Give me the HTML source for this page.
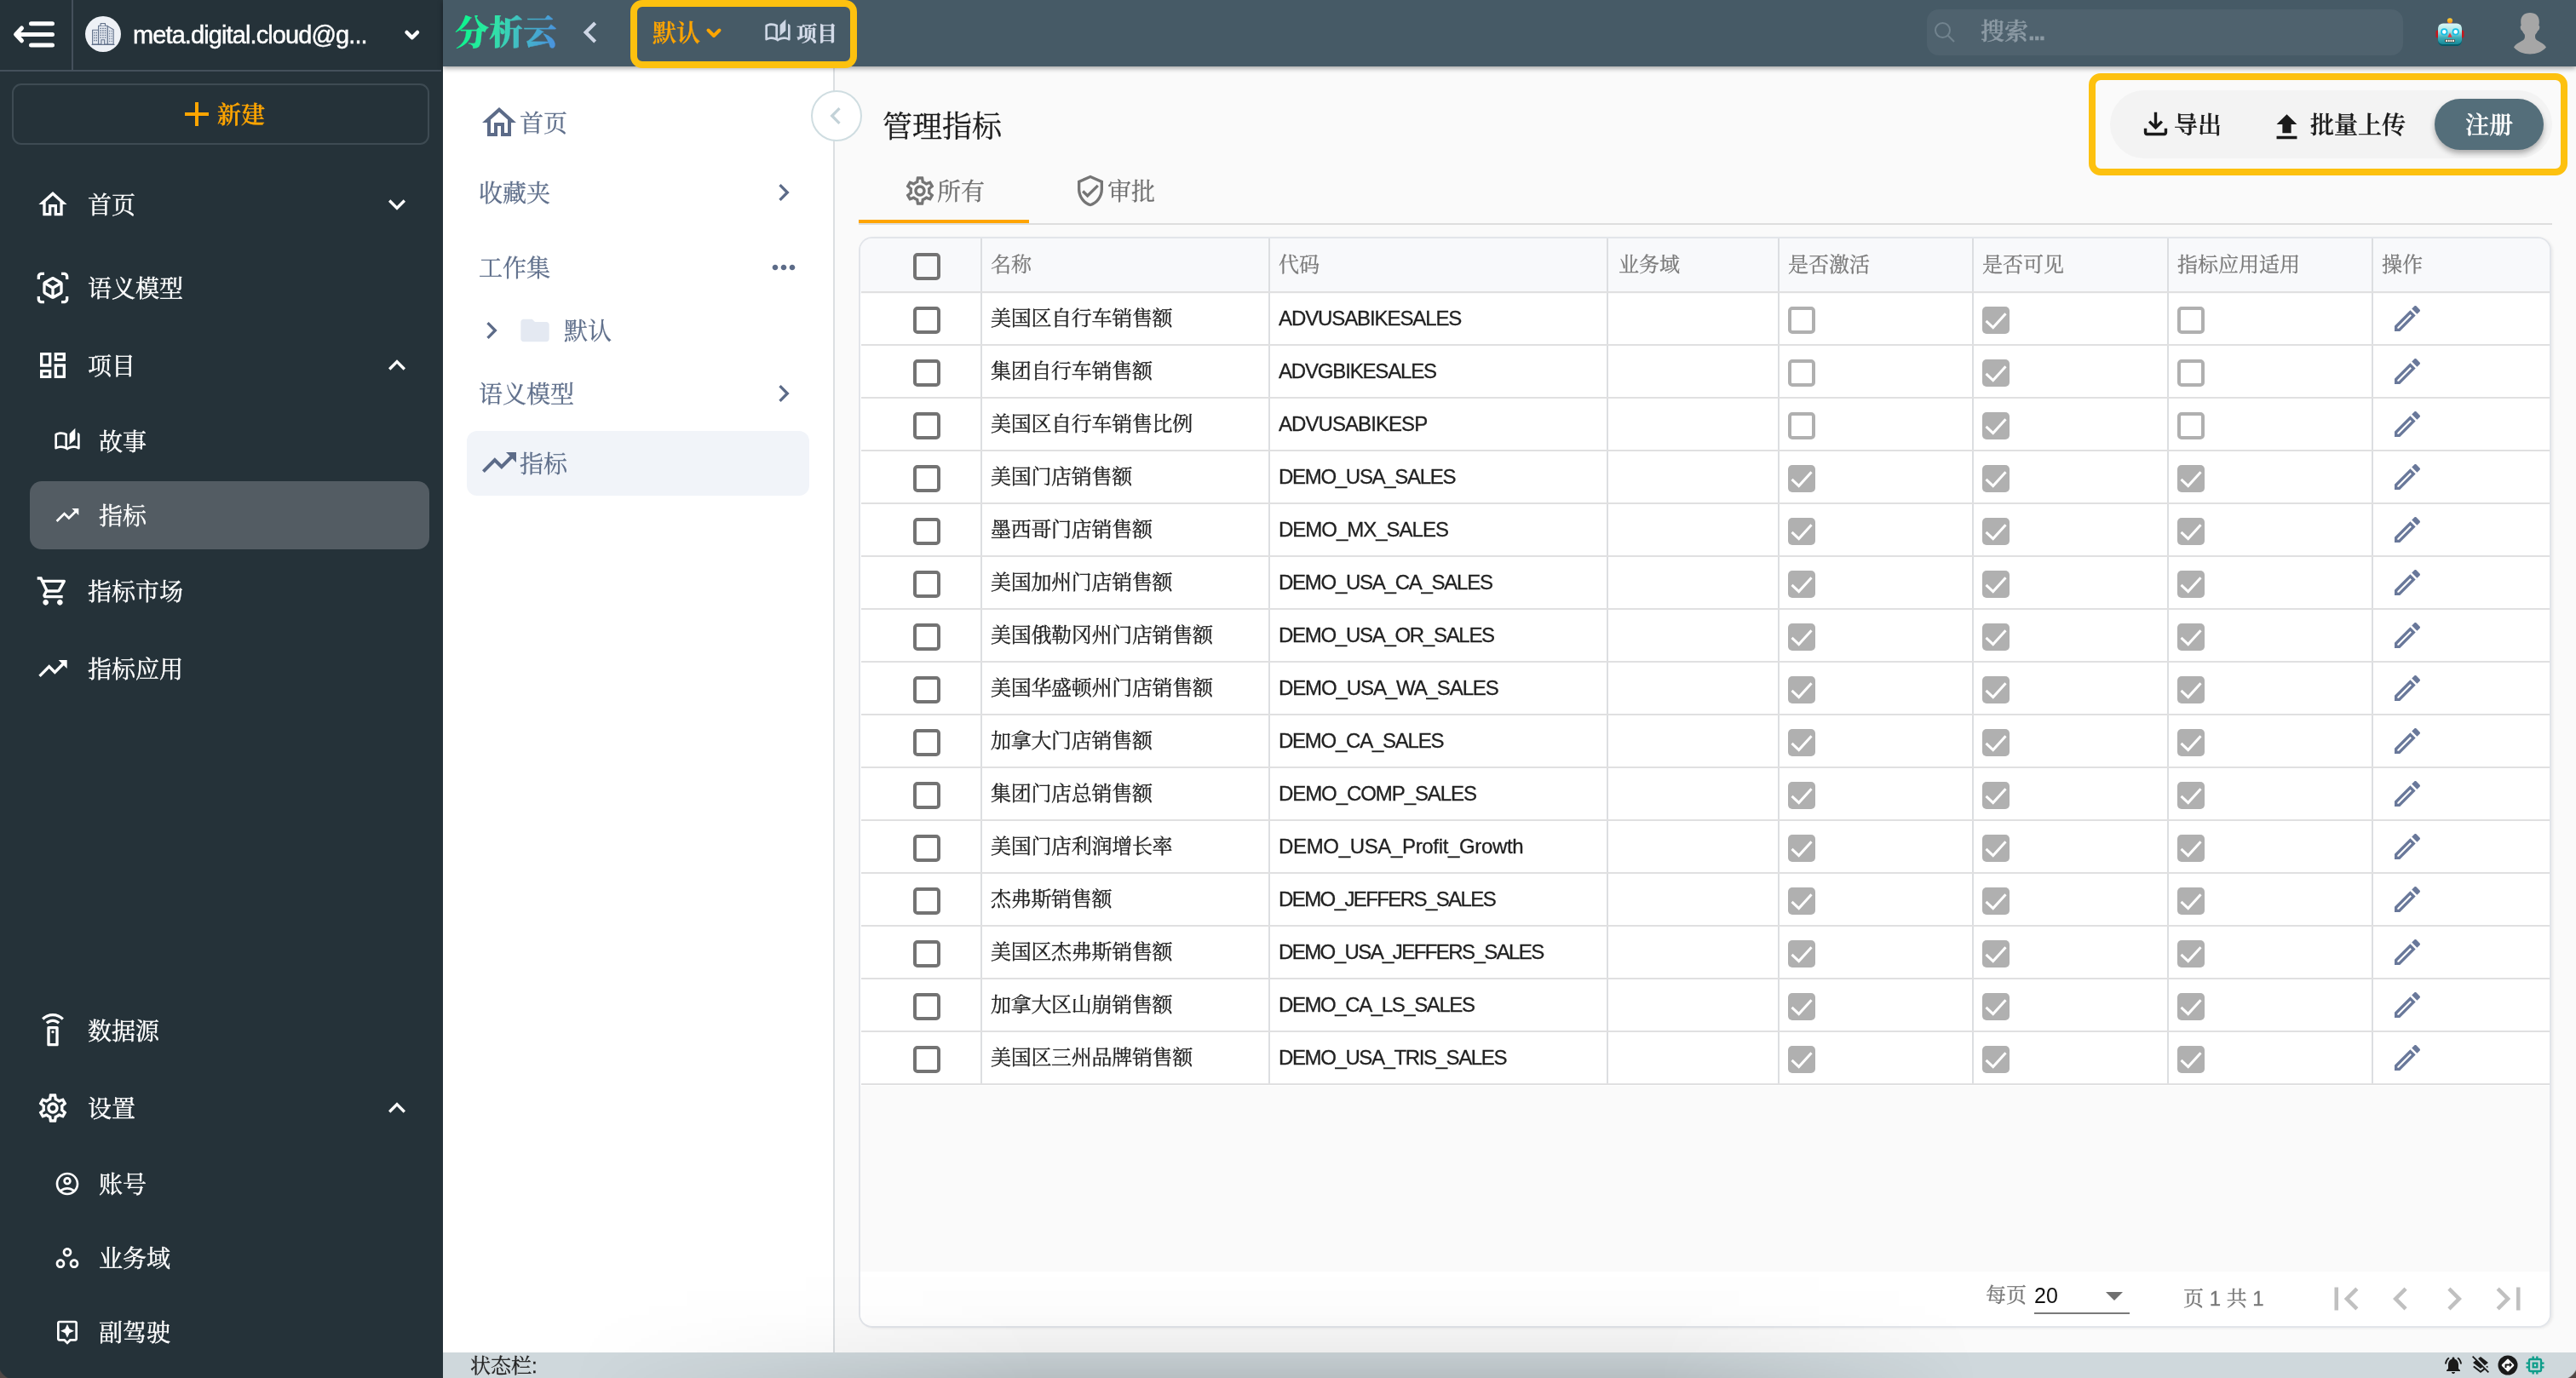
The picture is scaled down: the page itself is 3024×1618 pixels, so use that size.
<!DOCTYPE html>
<html lang="zh-CN">
<head>
<meta charset="utf-8">
<title>管理指标</title>
<style>
*{margin:0;padding:0;box-sizing:border-box}
html,body{width:3024px;height:1618px;overflow:hidden}
#root{position:absolute;left:0;top:0;width:3024px;height:1618px;will-change:transform}
body{position:relative;background:#fafafa;font-family:"Liberation Sans","Noto Serif CJK SC",serif;color:#212121}
.abs,.ic,.t,.bx{position:absolute}
.ic{display:block}
.t{line-height:1;white-space:nowrap;transform:translateY(-50%)}
.t.zh{transform:translateY(-43%)}
.t.zh.s24{transform:translateY(-48%)}
.zh{font-family:"Liberation Sans","Noto Serif CJK SC",serif;-webkit-text-stroke-width:.3px}
.sb{color:#fff;font-size:28px;font-weight:400}
.sb.zh{-webkit-text-stroke-width:.4px}
.mid{color:#5f6f8b;font-size:28px;font-weight:400}
.th{color:#7a7a7a;font-size:24px;font-weight:400}
.td{color:#212121;font-size:24px;font-weight:400}
.td.zh{letter-spacing:-0.3px}
.code{letter-spacing:-1.05px}
#sidebar{left:0;top:0;width:520px;height:1618px;background:#253239}
#hdr{left:520px;top:0;width:2504px;height:78px;background:#465a66;box-shadow:0 2px 6px rgba(0,0,0,.38)}
#mid{left:520px;top:78px;width:460px;height:1510px;background:#fff;border-right:2px solid #dcdfe2}
#status{left:520px;top:1588px;width:2504px;height:30px;background:#cfd8dc}
.hl{border:8px solid #fdc10f;border-radius:14px}
.cb{position:absolute;width:32px;height:32px;border:4px solid #737373;border-radius:5px}
.cbd{position:absolute;width:32px;height:32px;border:4px solid #b0b0b0;border-radius:5px}
.cbc{position:absolute;width:32px;height:32px;background:#b0b0b0;border-radius:5px}
.hline{position:absolute;height:2px;background:#e0e0e1}
.vline{position:absolute;width:2px;background:#dcdee1}

</style>
</head>
<body>
<div id="root">
<div id="sidebar" class="abs"></div>
<div class="abs" style="left:0;top:82px;width:518px;height:2px;background:#44505b"></div>
<div class="abs" style="left:84px;top:0;width:2px;height:83px;background:#44505b"></div>
<svg class="ic" style="left:14px;top:24px;width:52px;height:32px" viewBox="0 0 52 32"><g fill="none" stroke="#fff" stroke-width="5" stroke-linecap="round" stroke-linejoin="round"><path d="M22.500 3.800H47.500M6 16.400H47.500M22.500 29H47.500M11.500 9L4.500 16.400 11.500 23.800"/></g></svg>
<div class="abs" style="left:100px;top:19px;width:42px;height:42px;border-radius:50%;background:#eef1f6"></div>
<svg class="ic" style="left:107px;top:26px;width:28px;height:28px" viewBox="0 0 28 28"><g fill="#e3e8f0" stroke="#62718a" stroke-width="1.100" stroke-linejoin="round"><path d="M1.600 26.100V9.300h7v16.800z"/><path d="M19.200 26.100V4.600l7 4.100v17.400z"/><path d="M8.600 26.100V4.300h10.600v21.800z"/><path d="M11.100 4.300V1.500h5.400v2.800"/></g><g stroke="#62718a" stroke-width="1.300"><path d="M10.500 7.300h6.800M10.500 10h6.800M10.500 12.700h6.800M10.500 15.400h6.800M10.500 18.100h6.800" stroke-dasharray="1.500 1.150"/><path d="M3.200 12.500h3.800M3.200 15.500h3.800M3.200 18.500h3.800M3.200 21.500h3.800" stroke-dasharray="1.300 1.200"/><path d="M21.200 10.500h3.400M21.200 13.500h3.400M21.200 16.500h3.400M21.200 19.500h3.400M21.200 22.500h3.400" stroke-dasharray="1 1.400"/></g><path d="M11.900 26.100v-5.300h3.800v5.300" fill="#e3e8f0" stroke="#62718a" stroke-width="1.100"/><path d="M.5 26.400h27" stroke="#62718a" stroke-width="1.100"/></svg>
<div class="t sb" style="left:156px;top:41px;font-size:29px;font-weight:400;letter-spacing:-0.9px;-webkit-text-stroke:0.45px #fff">meta.digital.cloud@g...</div><svg class="ic" style="left:472px;top:32px;width:24px;height:18px" viewBox="0 0 24 18"><path d="M5.500 6L11.750 12.250 18 6" fill="none" stroke="#fff" stroke-width="4.500" stroke-linecap="round" stroke-linejoin="round"/></svg>
<div class="abs" style="left:14px;top:98px;width:490px;height:72px;border:2px solid #3e4b53;border-radius:11px"></div>
<svg class="ic" style="left:207px;top:110px;width:48px;height:48px" viewBox="0 0 24 24" ><path fill="#ffa500" d="M19 13h-6v6h-2v-6H5v-2h6V5h2v6h6v2z"/></svg><div class="t zh" style="left:255px;top:134px;color:#ffa500;font-size:28px;font-weight:600">新建</div><svg class="ic" style="left:42px;top:220px;width:40px;height:40px" viewBox="0 0 24 24" ><path fill="#fff" d="M12 5.69l5 4.5V18h-2v-6H9v6H7v-7.81l5-4.5M12 3L2 12h3v8h6v-6h2v6h6v-8h3L12 3z"/></svg><div class="t sb zh" style="left:103px;top:240px;">首页</div><svg class="ic" style="left:446px;top:220px;width:40px;height:40px" viewBox="0 0 24 24" ><path fill="#fff" d="M16.59 8.59L12 13.17 7.41 8.59 6 10l6 6 6-6z"/></svg>
<svg class="ic" style="left:42px;top:318px;width:40px;height:40px" viewBox="0 0 24 24" ><path fill="#fff" d="M3 4c0-.55.45-1 1-1h2V1H4C2.34 1 1 2.34 1 4v2h2V4zM3 20v-2H1v2c0 1.66 1.34 3 3 3h2v-2H4c-.55 0-1-.45-1-1zM20 1h-2v2h2c.55 0 1 .45 1 1v2h2V4c0-1.66-1.34-3-3-3zM21 20c0 .55-.45 1-1 1h-2v2h2c1.66 0 3-1.34 3-3v-2h-2v2zM19 14.870V9.130c0-.72-.38-1.38-1-1.730l-5-2.880c-.31-.18-.65-.27-1-.27s-.69.09-1 .27L6 7.390c-.62.36-1 1.020-1 1.740v5.740c0 .72.38 1.380 1 1.730l5 2.880c.31.18.65.27 1 .27s.69-.09 1-.27l5-2.880c.62-.35 1-1.010 1-1.730zM11 17.170l-4-2.300v-4.630l4 2.330v4.600zm1-6.330L8.040 8.530 12 6.250l3.960 2.280L12 10.840zm5 4.030l-4 2.300v-4.600l4-2.330v4.630z"/></svg><div class="t sb zh" style="left:103px;top:338px;">语义模型</div>
<svg class="ic" style="left:42px;top:409px;width:40px;height:40px" viewBox="0 0 24 24" ><path fill="#fff" d="M19 5v2h-4V5h4M9 5v6H5V5h4m10 8v6h-4v-6h4M9 17v2H5v-2h4M21 3h-8v6h8V3zM11 3H3v10h8V3zm10 8h-8v10h8V11zm-10 4H3v6h8v-6z"/></svg><div class="t sb zh" style="left:103px;top:429px;">项目</div><svg class="ic" style="left:446px;top:409px;width:40px;height:40px" viewBox="0 0 24 24" ><path fill="#fff" d="M12 8l-6 6 1.41 1.41L12 10.83l4.59 4.58L18 14z"/></svg>
<svg class="ic" style="left:42px;top:674px;width:40px;height:40px" viewBox="0 0 24 24" ><path fill="#fff" d="M15.55 13c.75 0 1.41-.41 1.75-1.03l3.58-6.49c.37-.66-.11-1.48-.87-1.48H5.21l-.94-2H1v2h2l3.6 7.59-1.35 2.44C4.52 15.37 5.48 17 7 17h12v-2H7l1.1-2h7.45zM6.16 6h12.15l-2.76 5H8.53L6.16 6zM7 18c-1.1 0-1.99.9-1.99 2S5.9 22 7 22s2-.9 2-2-.9-2-2-2zm10 0c-1.1 0-1.99.9-1.99 2s.89 2 1.99 2 2-.9 2-2-.9-2-2-2z"/></svg><div class="t sb zh" style="left:103px;top:694px;">指标市场</div>
<svg class="ic" style="left:42px;top:765px;width:40px;height:40px" viewBox="0 0 24 24" ><path fill="#fff" d="M16 6l2.29 2.29-4.88 4.88-4-4L2 16.59 3.41 18l6-6 4 4 6.3-6.29L22 12V6z"/></svg><div class="t sb zh" style="left:103px;top:785px;">指标应用</div>
<svg class="ic" style="left:42px;top:1190px;width:40px;height:40px" viewBox="0 0 24 24" ><path fill="#fff" d="M15 9H9c-.55 0-1 .45-1 1v12c0 .55.45 1 1 1h6c.55 0 1-.45 1-1V10c0-.55-.45-1-1-1zm-1 12h-4V11h4v10zM12 12a1 1 0 100 2 1 1 0 000-2zM7.050 6.050l1.410 1.410C9.370 6.560 10.620 6 12 6s2.630.56 3.540 1.460l1.410-1.410C15.680 4.780 13.930 4 12 4s-3.680.78-4.950 2.050zM12 0C8.960 0 6.210 1.230 4.220 3.220l1.410 1.410C7.260 3.010 9.510 2 12 2s4.740 1.010 6.360 2.640l1.410-1.410C17.790 1.230 15.040 0 12 0z"/></svg><div class="t sb zh" style="left:103px;top:1210px;">数据源</div>
<svg class="ic" style="left:42px;top:1281px;width:40px;height:40px" viewBox="0 0 24 24" ><path fill="#fff" d="M19.43 12.98c.04-.32.07-.64.07-.98 0-.34-.03-.66-.07-.98l2.11-1.65c.19-.15.24-.42.12-.64l-2-3.46c-.09-.16-.26-.25-.44-.25-.06 0-.12.01-.17.03l-2.49 1c-.52-.4-1.08-.73-1.69-.98l-.38-2.65C14.46 2.18 14.25 2 14 2h-4c-.25 0-.46.18-.49.42l-.38 2.65c-.61.25-1.17.59-1.69.98l-2.49-1c-.06-.02-.12-.03-.18-.03-.17 0-.34.09-.43.25l-2 3.46c-.13.22-.07.49.12.64l2.11 1.65c-.04.32-.07.65-.07.98 0 .33.03.66.07.98l-2.11 1.65c-.19.15-.24.42-.12.64l2 3.46c.09.16.26.25.44.25.06 0 .12-.01.17-.03l2.49-1c.52.4 1.08.73 1.69.98l.38 2.65c.03.24.24.42.49.42h4c.25 0 .46-.18.49-.42l.38-2.65c.61-.25 1.17-.59 1.69-.98l2.49 1c.06.02.12.03.18.03.17 0 .34-.09.43-.25l2-3.46c.12-.22.07-.49-.12-.64l-2.11-1.65zm-1.98-1.71c.04.31.05.52.05.73 0 .21-.02.43-.05.73l-.14 1.13.89.7 1.08.84-.7 1.21-1.27-.51-1.04-.42-.9.68c-.43.32-.84.56-1.25.73l-1.06.43-.16 1.13-.2 1.35h-1.4l-.19-1.35-.16-1.13-1.06-.43c-.43-.18-.83-.41-1.23-.71l-.91-.7-1.06.43-1.27.51-.7-1.21 1.08-.84.89-.7-.14-1.13c-.03-.31-.05-.54-.05-.74s.02-.43.05-.73l.14-1.13-.89-.7-1.08-.84.7-1.21 1.27.51 1.04.42.9-.68c.43-.32.84-.56 1.25-.73l1.06-.43.16-1.13.2-1.35h1.39l.19 1.35.16 1.13 1.06.43c.43.18.83.41 1.23.71l.91.7 1.06-.43 1.27-.51.7 1.21-1.07.85-.89.7.14 1.13zM12 8c-2.21 0-4 1.79-4 4s1.79 4 4 4 4-1.79 4-4-1.79-4-4-4zm0 6c-1.1 0-2-.9-2-2s.9-2 2-2 2 .9 2 2-.9 2-2 2z"/></svg><div class="t sb zh" style="left:103px;top:1301px;">设置</div><svg class="ic" style="left:446px;top:1281px;width:40px;height:40px" viewBox="0 0 24 24" ><path fill="#fff" d="M12 8l-6 6 1.41 1.41L12 10.83l4.59 4.58L18 14z"/></svg>
<div class="abs" style="left:35px;top:565px;width:469px;height:80px;border-radius:14px;background:#535c63"></div>
<svg class="ic" style="left:63px;top:502px;width:32px;height:32px" viewBox="0 0 24 24" ><path fill="#fff" d="M22.47 5.2c-.47-.24-.96-.44-1.47-.61v12.030c-1.14-.41-2.31-.62-3.5-.62-1.9 0-3.78.54-5.5 1.58V5.48C10.38 4.55 8.51 4 6.5 4c-1.79 0-3.48.44-4.97 1.2-.33.16-.53.51-.53.88v12.080c0 .58.47.99 1 .99.16 0 .32-.04.48-.12C3.69 18.4 5.05 18 6.5 18c2.07 0 3.98.82 5.5 2 1.52-1.18 3.43-2 5.5-2 1.45 0 2.81.4 4.02 1.04.16.080.32.12.48.12.52 0 1-.41 1-.99V6.080c0-.37-.2-.72-.53-.88zM10 16.620C8.860 16.21 7.69 16 6.5 16s-2.36.21-3.5.62V6.710C4.110 6.240 5.280 6 6.500 6c1.200 0 2.390.25 3.500.72v9.900zM19 .5l-5 5V15l5-4.5V.5z"/></svg><div class="t sb zh" style="left:116px;top:518px;">故事</div>
<svg class="ic" style="left:63px;top:589px;width:32px;height:32px" viewBox="0 0 24 24" ><path fill="#fff" d="M16 6l2.29 2.29-4.88 4.88-4-4L2 16.59 3.41 18l6-6 4 4 6.3-6.29L22 12V6z"/></svg><div class="t sb zh" style="left:116px;top:605px;">指标</div>
<svg class="ic" style="left:63px;top:1374px;width:32px;height:32px" viewBox="0 0 24 24" ><path fill="#fff" d="M12 2C6.48 2 2 6.48 2 12s4.48 10 10 10 10-4.48 10-10S17.52 2 12 2zM7.35 18.5C8.66 17.56 10.26 17 12 17s3.34.56 4.65 1.5C15.34 19.44 13.74 20 12 20s-3.34-.56-4.65-1.5zm10.79-1.38C16.45 15.8 14.32 15 12 15s-4.45.8-6.14 2.12C4.7 15.73 4 13.95 4 12c0-4.42 3.58-8 8-8s8 3.58 8 8c0 1.95-.7 3.730-1.86 5.12zM12 6c-1.93 0-3.5 1.57-3.5 3.5S10.07 13 12 13s3.5-1.57 3.5-3.5S13.93 6 12 6zm0 5c-.83 0-1.5-.67-1.5-1.5S11.170 8 12 8s1.5.67 1.5 1.5S12.83 11 12 11z"/></svg><div class="t sb zh" style="left:116px;top:1390px;">账号</div>
<svg class="ic" style="left:63px;top:1461px;width:32px;height:32px" viewBox="0 0 24 24" ><path fill="#fff" d="M6 15c1.1 0 2 .9 2 2s-.9 2-2 2-2-.9-2-2 .9-2 2-2m0-2c-2.2 0-4 1.8-4 4s1.8 4 4 4 4-1.8 4-4-1.8-4-4-4zm6-8c1.1 0 2 .9 2 2s-.9 2-2 2-2-.9-2-2 .9-2 2-2m0-2C9.8 3 8 4.8 8 7s1.8 4 4 4 4-1.8 4-4-1.8-4-4-4zm6 12c1.1 0 2 .9 2 2s-.9 2-2 2-2-.9-2-2 .9-2 2-2m0-2c-2.2 0-4 1.8-4 4s1.8 4 4 4 4-1.8 4-4-1.8-4-4-4z"/></svg><div class="t sb zh" style="left:116px;top:1477px;">业务域</div>
<svg class="ic" style="left:63px;top:1548px;width:32px;height:32px" viewBox="0 0 24 24" ><path fill="#fff" d="M19 2H5c-1.1 0-2 .9-2 2v14c0 1.1.9 2 2 2h4l3 3 3-3h4c1.1 0 2-.9 2-2V4c0-1.1-.9-2-2-2zm0 16h-4.830l-.59.59L12 20.170l-1.590-1.590-.58-.58H5V4h14v14zm-7-1l1.880-4.120L18 11l-4.120-1.880L12 5l-1.880 4.120L6 11l4.120 1.880z"/></svg><div class="t sb zh" style="left:116px;top:1564px;">副驾驶</div>
<div id="mid" class="abs"></div>
<svg class="ic" style="left:562px;top:120px;width:48px;height:48px" viewBox="0 0 24 24" ><path fill="#5c6b88" d="M12 5.69l5 4.5V18h-2v-6H9v6H7v-7.81l5-4.5M12 3L2 12h3v8h6v-6h2v6h6v-8h3L12 3z"/></svg><div class="t mid zh" style="left:610px;top:144px;">首页</div><div class="t mid zh" style="left:562px;top:226px;">收藏夹</div><svg class="ic" style="left:900px;top:206px;width:40px;height:40px" viewBox="0 0 24 24" ><path fill="#5c6b88" d="M10 6L8.59 7.41 13.17 12l-4.58 4.59L10 18l6-6z"/></svg><div class="t mid zh" style="left:562px;top:314px;">工作集</div><svg class="ic" style="left:900px;top:294px;width:40px;height:40px" viewBox="0 0 24 24" ><path fill="#5c6b88" d="M6 10c-1.1 0-2 .9-2 2s.9 2 2 2 2-.9 2-2-.9-2-2-2zm12 0c-1.1 0-2 .9-2 2s.9 2 2 2 2-.9 2-2-.9-2-2-2zm-6 0c-1.1 0-2 .9-2 2s.9 2 2 2 2-.9 2-2-.9-2-2-2z"/></svg><svg class="ic" style="left:557px;top:368px;width:40px;height:40px" viewBox="0 0 24 24" ><path fill="#5c6b88" d="M10 6L8.59 7.41 13.17 12l-4.58 4.59L10 18l6-6z"/></svg><svg class="ic" style="left:608px;top:368px;width:40px;height:40px" viewBox="0 0 24 24" ><path fill="#e4e9f2" d="M10 4H4c-1.1 0-1.990.9-1.990 2L2 18c0 1.1.9 2 2 2h16c1.1 0 2-.9 2-2V8c0-1.1-.9-2-2-2h-8l-2-2z"/></svg><div class="t mid zh" style="left:662px;top:388px;">默认</div><div class="t mid zh" style="left:562px;top:462px;">语义模型</div><svg class="ic" style="left:900px;top:442px;width:40px;height:40px" viewBox="0 0 24 24" ><path fill="#5c6b88" d="M10 6L8.59 7.41 13.17 12l-4.58 4.59L10 18l6-6z"/></svg><div class="abs" style="left:548px;top:506px;width:402px;height:76px;border-radius:12px;background:#f1f4f9"></div>
<svg class="ic" style="left:562px;top:519px;width:48px;height:48px" viewBox="0 0 24 24" ><path fill="#5c6b88" d="M16 6l2.29 2.29-4.88 4.88-4-4L2 16.59 3.41 18l6-6 4 4 6.3-6.29L22 12V6z"/></svg><div class="t mid zh" style="left:610px;top:544px;">指标</div><div class="abs" style="left:952px;top:106px;width:60px;height:60px;border-radius:50%;background:#fff;border:2px solid #cfdde1"></div>
<svg class="ic" style="left:961px;top:116px;width:40px;height:40px" viewBox="0 0 24 24" ><path fill="#c3d2d8" d="M15.41 7.41L14 6l-6 6 6 6 1.41-1.41L10.83 12z"/></svg><div class="t zh" style="left:1036px;top:146px;font-size:35px;color:#1c1c1c">管理指标</div><div class="abs hl" style="left:2452px;top:86px;width:562px;height:120px"></div>
<div class="abs" style="left:2477px;top:106px;width:519px;height:80px;border-radius:40px;background:#f3f3f3"></div>
<svg class="ic" style="left:2510px;top:125px;width:41px;height:41px" viewBox="0 0 24 24" ><path fill="#1a1a1a" d="M18 15v3H6v-3H4v3c0 1.1.9 2 2 2h12c1.1 0 2-.9 2-2v-3h-2zm-1-4l-1.410-1.410L13 12.170V4h-2v8.170L8.410 9.590 7 11l5 5 5-5z"/></svg><div class="t zh" style="left:2552px;top:146px;font-size:28px;font-weight:600;color:#1a1a1a">导出</div><svg class="ic" style="left:2664px;top:129px;width:41px;height:41px" viewBox="0 0 24 24" ><path fill="#1a1a1a" d="M5 20h14v-2H5v2zm0-10h4v6h6v-6h4l-7-7-7 7z"/></svg><div class="t zh" style="left:2712px;top:146px;font-size:28px;font-weight:600;color:#1a1a1a">批量上传</div><div class="abs" style="left:2858px;top:116px;width:128px;height:60px;border-radius:30px;background:#546e7a;box-shadow:0 4px 6px rgba(0,0,0,.3)"></div>
<div class="t zh" style="left:2894px;top:146px;font-size:28px;font-weight:600;color:#fff">注册</div><div class="abs" style="left:1008px;top:262px;width:1988px;height:2px;background:#dedede"></div>
<div class="abs" style="left:1008px;top:258px;width:200px;height:4px;background:#ffa500"></div>
<svg class="ic" style="left:1060px;top:204px;width:40px;height:40px" viewBox="0 0 24 24" ><path fill="#757575" d="M19.43 12.98c.04-.32.07-.64.07-.98 0-.34-.03-.66-.07-.98l2.11-1.65c.19-.15.24-.42.12-.64l-2-3.46c-.09-.16-.26-.25-.44-.25-.06 0-.12.01-.17.03l-2.49 1c-.52-.4-1.08-.73-1.69-.98l-.38-2.65C14.46 2.18 14.25 2 14 2h-4c-.25 0-.46.18-.49.42l-.38 2.65c-.61.25-1.17.59-1.69.98l-2.49-1c-.06-.02-.12-.03-.18-.03-.17 0-.34.09-.43.25l-2 3.46c-.13.22-.07.49.12.64l2.11 1.65c-.04.32-.07.65-.07.98 0 .33.03.66.07.98l-2.11 1.65c-.19.15-.24.42-.12.64l2 3.46c.09.16.26.25.44.25.06 0 .12-.01.17-.03l2.49-1c.52.4 1.08.73 1.69.98l.38 2.65c.03.24.24.42.49.42h4c.25 0 .46-.18.49-.42l.38-2.65c.61-.25 1.17-.59 1.69-.98l2.49 1c.06.02.12.03.18.03.17 0 .34-.09.43-.25l2-3.46c.12-.22.07-.49-.12-.64l-2.11-1.65zm-1.98-1.71c.04.31.05.52.05.73 0 .21-.02.43-.05.73l-.14 1.13.89.7 1.08.84-.7 1.21-1.27-.51-1.04-.42-.9.68c-.43.32-.84.56-1.25.73l-1.06.43-.16 1.13-.2 1.35h-1.4l-.19-1.35-.16-1.13-1.06-.43c-.43-.18-.83-.41-1.23-.71l-.91-.7-1.06.43-1.27.51-.7-1.21 1.08-.84.89-.7-.14-1.13c-.03-.31-.05-.54-.05-.74s.02-.43.05-.73l.14-1.13-.89-.7-1.08-.84.7-1.21 1.27.51 1.04.42.9-.68c.43-.32.84-.56 1.25-.73l1.06-.43.16-1.13.2-1.35h1.39l.19 1.35.16 1.13 1.06.43c.43.18.83.41 1.23.71l.91.7 1.06-.43 1.27-.51.7 1.21-1.07.85-.89.7.14 1.13zM12 8c-2.21 0-4 1.79-4 4s1.79 4 4 4 4-1.79 4-4-1.79-4-4-4zm0 6c-1.1 0-2-.9-2-2s.9-2 2-2 2 .9 2 2-.9 2-2 2z"/></svg><div class="t zh" style="left:1100px;top:224px;font-size:28px;color:#6f6f6f">所有</div><svg class="ic" style="left:1260px;top:204px;width:40px;height:40px" viewBox="0 0 24 24" ><path fill="#757575" d="M12 1L3 5v6c0 5.550 3.840 10.740 9 12 5.160-1.260 9-6.450 9-12V5l-9-4zm7 10c0 4.520-2.980 8.690-7 9.930-4.020-1.240-7-5.410-7-9.930V6.300l7-3.110 7 3.110V11zm-11.590.59L6 13l4 4 8-8-1.410-1.420L10 14.170z"/></svg><div class="t zh" style="left:1300px;top:224px;font-size:28px;color:#6f6f6f">审批</div><div class="abs" style="left:1008px;top:278px;width:1987px;height:1281px;border:2px solid #e2e5ea;border-radius:16px;background:#fafafa;overflow:hidden;box-shadow:2px 1px 3px rgba(0,0,0,.06)"><div class="abs" style="left:0;top:0;width:1987px;height:64px;background:#f8f9fb"></div><div class="abs" style="left:0;top:65px;width:1987px;height:930px;background:#fff"></div><div class="abs" style="left:0;top:1213px;width:1987px;height:70px;background:#fff"></div></div>
<div class="vline" style="left:1151px;top:280px;height:993px"></div><div class="vline" style="left:1489px;top:280px;height:993px"></div><div class="vline" style="left:1886px;top:280px;height:993px"></div><div class="vline" style="left:2087px;top:280px;height:993px"></div><div class="vline" style="left:2315px;top:280px;height:993px"></div><div class="vline" style="left:2544px;top:280px;height:993px"></div><div class="vline" style="left:2784px;top:280px;height:993px"></div>
<div class="hline" style="left:1011px;top:342px;width:1982px"></div><div class="hline" style="left:1011px;top:404px;width:1982px"></div><div class="hline" style="left:1011px;top:466px;width:1982px"></div><div class="hline" style="left:1011px;top:528px;width:1982px"></div><div class="hline" style="left:1011px;top:590px;width:1982px"></div><div class="hline" style="left:1011px;top:652px;width:1982px"></div><div class="hline" style="left:1011px;top:714px;width:1982px"></div><div class="hline" style="left:1011px;top:776px;width:1982px"></div><div class="hline" style="left:1011px;top:838px;width:1982px"></div><div class="hline" style="left:1011px;top:900px;width:1982px"></div><div class="hline" style="left:1011px;top:962px;width:1982px"></div><div class="hline" style="left:1011px;top:1024px;width:1982px"></div><div class="hline" style="left:1011px;top:1086px;width:1982px"></div><div class="hline" style="left:1011px;top:1148px;width:1982px"></div><div class="hline" style="left:1011px;top:1210px;width:1982px"></div><div class="hline" style="left:1011px;top:1272px;width:1982px"></div>
<div class="t th zh s24" style="left:1163px;top:311px;">名称</div><div class="t th zh s24" style="left:1501px;top:311px;">代码</div><div class="t th zh s24" style="left:1900px;top:311px;">业务域</div><div class="t th zh s24" style="left:2099px;top:311px;">是否激活</div><div class="t th zh s24" style="left:2327px;top:311px;">是否可见</div><div class="t th zh s24" style="left:2556px;top:311px;">指标应用适用</div><div class="t th zh s24" style="left:2796px;top:311px;">操作</div><div class="cb" style="left:1072px;top:297px"></div>
<div class="cb" style="left:1072px;top:360px"></div><div class="t td zh s24" style="left:1163px;top:374px;">美国区自行车销售额</div><div class="t td" style="left:1501px;top:374px;letter-spacing:-1.1px;-webkit-text-stroke:0.3px #212121">ADVUSABIKESALES</div><div class="cbd" style="left:2099px;top:360px"></div><div class="cbc" style="left:2327px;top:360px"><svg viewBox="0 0 32 32" width="32" height="32" style="display:block"><path d="M4.500 16.800L12.700 24.500 27.500 8.300" fill="none" stroke="#fff" stroke-width="3"/></svg></div><div class="cbd" style="left:2556px;top:360px"></div><svg class="ic" style="left:2806px;top:354px;width:40px;height:40px" viewBox="0 0 24 24" ><path fill="#69789a" d="M14.060 9.020l.92.92L5.920 19H5v-.92l9.060-9.060M17.660 3c-.25 0-.51.1-.7.29l-1.830 1.830 3.750 3.750 1.830-1.830c.39-.39.39-1.020 0-1.410l-2.340-2.340c-.2-.2-.45-.29-.71-.29zm-3.600 3.190L3 17.250V21h3.750L17.810 9.940l-3.750-3.750z"/></svg>
<div class="cb" style="left:1072px;top:422px"></div><div class="t td zh s24" style="left:1163px;top:436px;">集团自行车销售额</div><div class="t td" style="left:1501px;top:436px;letter-spacing:-1.17px;-webkit-text-stroke:0.3px #212121">ADVGBIKESALES</div><div class="cbd" style="left:2099px;top:422px"></div><div class="cbc" style="left:2327px;top:422px"><svg viewBox="0 0 32 32" width="32" height="32" style="display:block"><path d="M4.500 16.800L12.700 24.500 27.500 8.300" fill="none" stroke="#fff" stroke-width="3"/></svg></div><div class="cbd" style="left:2556px;top:422px"></div><svg class="ic" style="left:2806px;top:416px;width:40px;height:40px" viewBox="0 0 24 24" ><path fill="#69789a" d="M14.060 9.020l.92.92L5.920 19H5v-.92l9.060-9.060M17.660 3c-.25 0-.51.1-.7.29l-1.830 1.830 3.750 3.750 1.830-1.830c.39-.39.39-1.020 0-1.410l-2.340-2.340c-.2-.2-.45-.29-.71-.29zm-3.600 3.190L3 17.250V21h3.750L17.810 9.940l-3.750-3.750z"/></svg>
<div class="cb" style="left:1072px;top:484px"></div><div class="t td zh s24" style="left:1163px;top:498px;">美国区自行车销售比例</div><div class="t td" style="left:1501px;top:498px;letter-spacing:-0.93px;-webkit-text-stroke:0.3px #212121">ADVUSABIKESP</div><div class="cbd" style="left:2099px;top:484px"></div><div class="cbc" style="left:2327px;top:484px"><svg viewBox="0 0 32 32" width="32" height="32" style="display:block"><path d="M4.500 16.800L12.700 24.500 27.500 8.300" fill="none" stroke="#fff" stroke-width="3"/></svg></div><div class="cbd" style="left:2556px;top:484px"></div><svg class="ic" style="left:2806px;top:478px;width:40px;height:40px" viewBox="0 0 24 24" ><path fill="#69789a" d="M14.060 9.020l.92.92L5.920 19H5v-.92l9.060-9.060M17.660 3c-.25 0-.51.1-.7.29l-1.830 1.830 3.750 3.750 1.830-1.830c.39-.39.39-1.020 0-1.410l-2.340-2.340c-.2-.2-.45-.29-.71-.29zm-3.600 3.190L3 17.250V21h3.750L17.810 9.940l-3.750-3.750z"/></svg>
<div class="cb" style="left:1072px;top:546px"></div><div class="t td zh s24" style="left:1163px;top:560px;">美国门店销售额</div><div class="t td" style="left:1501px;top:560px;letter-spacing:-1.3px;-webkit-text-stroke:0.3px #212121">DEMO_USA_SALES</div><div class="cbc" style="left:2099px;top:546px"><svg viewBox="0 0 32 32" width="32" height="32" style="display:block"><path d="M4.500 16.800L12.700 24.500 27.500 8.300" fill="none" stroke="#fff" stroke-width="3"/></svg></div><div class="cbc" style="left:2327px;top:546px"><svg viewBox="0 0 32 32" width="32" height="32" style="display:block"><path d="M4.500 16.800L12.700 24.500 27.500 8.300" fill="none" stroke="#fff" stroke-width="3"/></svg></div><div class="cbc" style="left:2556px;top:546px"><svg viewBox="0 0 32 32" width="32" height="32" style="display:block"><path d="M4.500 16.800L12.700 24.500 27.500 8.300" fill="none" stroke="#fff" stroke-width="3"/></svg></div><svg class="ic" style="left:2806px;top:540px;width:40px;height:40px" viewBox="0 0 24 24" ><path fill="#69789a" d="M14.060 9.020l.92.92L5.920 19H5v-.92l9.060-9.060M17.660 3c-.25 0-.51.1-.7.29l-1.830 1.830 3.750 3.750 1.830-1.830c.39-.39.39-1.020 0-1.410l-2.340-2.340c-.2-.2-.45-.29-.71-.29zm-3.600 3.190L3 17.250V21h3.750L17.810 9.940l-3.750-3.750z"/></svg>
<div class="cb" style="left:1072px;top:608px"></div><div class="t td zh s24" style="left:1163px;top:622px;">墨西哥门店销售额</div><div class="t td" style="left:1501px;top:622px;letter-spacing:-1.01px;-webkit-text-stroke:0.3px #212121">DEMO_MX_SALES</div><div class="cbc" style="left:2099px;top:608px"><svg viewBox="0 0 32 32" width="32" height="32" style="display:block"><path d="M4.500 16.800L12.700 24.500 27.500 8.300" fill="none" stroke="#fff" stroke-width="3"/></svg></div><div class="cbc" style="left:2327px;top:608px"><svg viewBox="0 0 32 32" width="32" height="32" style="display:block"><path d="M4.500 16.800L12.700 24.500 27.500 8.300" fill="none" stroke="#fff" stroke-width="3"/></svg></div><div class="cbc" style="left:2556px;top:608px"><svg viewBox="0 0 32 32" width="32" height="32" style="display:block"><path d="M4.500 16.800L12.700 24.500 27.500 8.300" fill="none" stroke="#fff" stroke-width="3"/></svg></div><svg class="ic" style="left:2806px;top:602px;width:40px;height:40px" viewBox="0 0 24 24" ><path fill="#69789a" d="M14.060 9.020l.92.92L5.920 19H5v-.92l9.060-9.060M17.660 3c-.25 0-.51.1-.7.29l-1.830 1.830 3.750 3.750 1.830-1.830c.39-.39.39-1.020 0-1.410l-2.340-2.340c-.2-.2-.45-.29-.71-.29zm-3.600 3.190L3 17.250V21h3.750L17.810 9.940l-3.750-3.750z"/></svg>
<div class="cb" style="left:1072px;top:670px"></div><div class="t td zh s24" style="left:1163px;top:684px;">美国加州门店销售额</div><div class="t td" style="left:1501px;top:684px;letter-spacing:-1.26px;-webkit-text-stroke:0.3px #212121">DEMO_USA_CA_SALES</div><div class="cbc" style="left:2099px;top:670px"><svg viewBox="0 0 32 32" width="32" height="32" style="display:block"><path d="M4.500 16.800L12.700 24.500 27.500 8.300" fill="none" stroke="#fff" stroke-width="3"/></svg></div><div class="cbc" style="left:2327px;top:670px"><svg viewBox="0 0 32 32" width="32" height="32" style="display:block"><path d="M4.500 16.800L12.700 24.500 27.500 8.300" fill="none" stroke="#fff" stroke-width="3"/></svg></div><div class="cbc" style="left:2556px;top:670px"><svg viewBox="0 0 32 32" width="32" height="32" style="display:block"><path d="M4.500 16.800L12.700 24.500 27.500 8.300" fill="none" stroke="#fff" stroke-width="3"/></svg></div><svg class="ic" style="left:2806px;top:664px;width:40px;height:40px" viewBox="0 0 24 24" ><path fill="#69789a" d="M14.060 9.020l.92.92L5.920 19H5v-.92l9.060-9.060M17.660 3c-.25 0-.51.1-.7.29l-1.830 1.830 3.750 3.750 1.830-1.830c.39-.39.39-1.020 0-1.410l-2.340-2.340c-.2-.2-.45-.29-.71-.29zm-3.600 3.190L3 17.250V21h3.750L17.810 9.940l-3.750-3.750z"/></svg>
<div class="cb" style="left:1072px;top:732px"></div><div class="t td zh s24" style="left:1163px;top:746px;">美国俄勒冈州门店销售额</div><div class="t td" style="left:1501px;top:746px;letter-spacing:-1.29px;-webkit-text-stroke:0.3px #212121">DEMO_USA_OR_SALES</div><div class="cbc" style="left:2099px;top:732px"><svg viewBox="0 0 32 32" width="32" height="32" style="display:block"><path d="M4.500 16.800L12.700 24.500 27.500 8.300" fill="none" stroke="#fff" stroke-width="3"/></svg></div><div class="cbc" style="left:2327px;top:732px"><svg viewBox="0 0 32 32" width="32" height="32" style="display:block"><path d="M4.500 16.800L12.700 24.500 27.500 8.300" fill="none" stroke="#fff" stroke-width="3"/></svg></div><div class="cbc" style="left:2556px;top:732px"><svg viewBox="0 0 32 32" width="32" height="32" style="display:block"><path d="M4.500 16.800L12.700 24.500 27.500 8.300" fill="none" stroke="#fff" stroke-width="3"/></svg></div><svg class="ic" style="left:2806px;top:726px;width:40px;height:40px" viewBox="0 0 24 24" ><path fill="#69789a" d="M14.060 9.020l.92.92L5.920 19H5v-.92l9.060-9.060M17.660 3c-.25 0-.51.1-.7.29l-1.830 1.830 3.750 3.750 1.830-1.830c.39-.39.39-1.020 0-1.410l-2.340-2.340c-.2-.2-.45-.29-.71-.29zm-3.600 3.190L3 17.250V21h3.750L17.810 9.940l-3.750-3.750z"/></svg>
<div class="cb" style="left:1072px;top:794px"></div><div class="t td zh s24" style="left:1163px;top:808px;">美国华盛顿州门店销售额</div><div class="t td" style="left:1501px;top:808px;letter-spacing:-1.11px;-webkit-text-stroke:0.3px #212121">DEMO_USA_WA_SALES</div><div class="cbc" style="left:2099px;top:794px"><svg viewBox="0 0 32 32" width="32" height="32" style="display:block"><path d="M4.500 16.800L12.700 24.500 27.500 8.300" fill="none" stroke="#fff" stroke-width="3"/></svg></div><div class="cbc" style="left:2327px;top:794px"><svg viewBox="0 0 32 32" width="32" height="32" style="display:block"><path d="M4.500 16.800L12.700 24.500 27.500 8.300" fill="none" stroke="#fff" stroke-width="3"/></svg></div><div class="cbc" style="left:2556px;top:794px"><svg viewBox="0 0 32 32" width="32" height="32" style="display:block"><path d="M4.500 16.800L12.700 24.500 27.500 8.300" fill="none" stroke="#fff" stroke-width="3"/></svg></div><svg class="ic" style="left:2806px;top:788px;width:40px;height:40px" viewBox="0 0 24 24" ><path fill="#69789a" d="M14.060 9.020l.92.92L5.920 19H5v-.92l9.060-9.060M17.660 3c-.25 0-.51.1-.7.29l-1.830 1.830 3.750 3.750 1.830-1.830c.39-.39.39-1.020 0-1.410l-2.340-2.340c-.2-.2-.45-.29-.71-.29zm-3.600 3.190L3 17.250V21h3.750L17.810 9.940l-3.750-3.750z"/></svg>
<div class="cb" style="left:1072px;top:856px"></div><div class="t td zh s24" style="left:1163px;top:870px;">加拿大门店销售额</div><div class="t td" style="left:1501px;top:870px;letter-spacing:-1.25px;-webkit-text-stroke:0.3px #212121">DEMO_CA_SALES</div><div class="cbc" style="left:2099px;top:856px"><svg viewBox="0 0 32 32" width="32" height="32" style="display:block"><path d="M4.500 16.800L12.700 24.500 27.500 8.300" fill="none" stroke="#fff" stroke-width="3"/></svg></div><div class="cbc" style="left:2327px;top:856px"><svg viewBox="0 0 32 32" width="32" height="32" style="display:block"><path d="M4.500 16.800L12.700 24.500 27.500 8.300" fill="none" stroke="#fff" stroke-width="3"/></svg></div><div class="cbc" style="left:2556px;top:856px"><svg viewBox="0 0 32 32" width="32" height="32" style="display:block"><path d="M4.500 16.800L12.700 24.500 27.500 8.300" fill="none" stroke="#fff" stroke-width="3"/></svg></div><svg class="ic" style="left:2806px;top:850px;width:40px;height:40px" viewBox="0 0 24 24" ><path fill="#69789a" d="M14.060 9.020l.92.92L5.920 19H5v-.92l9.060-9.060M17.660 3c-.25 0-.51.1-.7.29l-1.830 1.830 3.750 3.750 1.830-1.830c.39-.39.39-1.020 0-1.410l-2.340-2.340c-.2-.2-.45-.29-.71-.29zm-3.600 3.190L3 17.250V21h3.750L17.810 9.940l-3.750-3.750z"/></svg>
<div class="cb" style="left:1072px;top:918px"></div><div class="t td zh s24" style="left:1163px;top:932px;">集团门店总销售额</div><div class="t td" style="left:1501px;top:932px;letter-spacing:-1.08px;-webkit-text-stroke:0.3px #212121">DEMO_COMP_SALES</div><div class="cbc" style="left:2099px;top:918px"><svg viewBox="0 0 32 32" width="32" height="32" style="display:block"><path d="M4.500 16.800L12.700 24.500 27.500 8.300" fill="none" stroke="#fff" stroke-width="3"/></svg></div><div class="cbc" style="left:2327px;top:918px"><svg viewBox="0 0 32 32" width="32" height="32" style="display:block"><path d="M4.500 16.800L12.700 24.500 27.500 8.300" fill="none" stroke="#fff" stroke-width="3"/></svg></div><div class="cbc" style="left:2556px;top:918px"><svg viewBox="0 0 32 32" width="32" height="32" style="display:block"><path d="M4.500 16.800L12.700 24.500 27.500 8.300" fill="none" stroke="#fff" stroke-width="3"/></svg></div><svg class="ic" style="left:2806px;top:912px;width:40px;height:40px" viewBox="0 0 24 24" ><path fill="#69789a" d="M14.060 9.020l.92.92L5.920 19H5v-.92l9.060-9.060M17.660 3c-.25 0-.51.1-.7.29l-1.830 1.830 3.750 3.750 1.830-1.830c.39-.39.39-1.020 0-1.410l-2.340-2.340c-.2-.2-.45-.29-.71-.29zm-3.600 3.190L3 17.250V21h3.750L17.810 9.940l-3.750-3.750z"/></svg>
<div class="cb" style="left:1072px;top:980px"></div><div class="t td zh s24" style="left:1163px;top:994px;">美国门店利润增长率</div><div class="t td" style="left:1501px;top:994px;letter-spacing:-0.34px;-webkit-text-stroke:0.3px #212121">DEMO_USA_Profit_Growth</div><div class="cbc" style="left:2099px;top:980px"><svg viewBox="0 0 32 32" width="32" height="32" style="display:block"><path d="M4.500 16.800L12.700 24.500 27.500 8.300" fill="none" stroke="#fff" stroke-width="3"/></svg></div><div class="cbc" style="left:2327px;top:980px"><svg viewBox="0 0 32 32" width="32" height="32" style="display:block"><path d="M4.500 16.800L12.700 24.500 27.500 8.300" fill="none" stroke="#fff" stroke-width="3"/></svg></div><div class="cbc" style="left:2556px;top:980px"><svg viewBox="0 0 32 32" width="32" height="32" style="display:block"><path d="M4.500 16.800L12.700 24.500 27.500 8.300" fill="none" stroke="#fff" stroke-width="3"/></svg></div><svg class="ic" style="left:2806px;top:974px;width:40px;height:40px" viewBox="0 0 24 24" ><path fill="#69789a" d="M14.060 9.020l.92.92L5.920 19H5v-.92l9.060-9.060M17.660 3c-.25 0-.51.1-.7.29l-1.830 1.830 3.750 3.750 1.830-1.830c.39-.39.39-1.020 0-1.410l-2.340-2.340c-.2-.2-.45-.29-.71-.29zm-3.600 3.190L3 17.250V21h3.750L17.810 9.940l-3.750-3.750z"/></svg>
<div class="cb" style="left:1072px;top:1042px"></div><div class="t td zh s24" style="left:1163px;top:1056px;">杰弗斯销售额</div><div class="t td" style="left:1501px;top:1056px;letter-spacing:-1.59px;-webkit-text-stroke:0.3px #212121">DEMO_JEFFERS_SALES</div><div class="cbc" style="left:2099px;top:1042px"><svg viewBox="0 0 32 32" width="32" height="32" style="display:block"><path d="M4.500 16.800L12.700 24.500 27.500 8.300" fill="none" stroke="#fff" stroke-width="3"/></svg></div><div class="cbc" style="left:2327px;top:1042px"><svg viewBox="0 0 32 32" width="32" height="32" style="display:block"><path d="M4.500 16.800L12.700 24.500 27.500 8.300" fill="none" stroke="#fff" stroke-width="3"/></svg></div><div class="cbc" style="left:2556px;top:1042px"><svg viewBox="0 0 32 32" width="32" height="32" style="display:block"><path d="M4.500 16.800L12.700 24.500 27.500 8.300" fill="none" stroke="#fff" stroke-width="3"/></svg></div><svg class="ic" style="left:2806px;top:1036px;width:40px;height:40px" viewBox="0 0 24 24" ><path fill="#69789a" d="M14.060 9.020l.92.92L5.920 19H5v-.92l9.060-9.060M17.660 3c-.25 0-.51.1-.7.29l-1.830 1.830 3.750 3.750 1.830-1.830c.39-.39.39-1.020 0-1.410l-2.340-2.340c-.2-.2-.45-.29-.71-.29zm-3.600 3.190L3 17.250V21h3.750L17.810 9.940l-3.750-3.750z"/></svg>
<div class="cb" style="left:1072px;top:1104px"></div><div class="t td zh s24" style="left:1163px;top:1118px;">美国区杰弗斯销售额</div><div class="t td" style="left:1501px;top:1118px;letter-spacing:-1.58px;-webkit-text-stroke:0.3px #212121">DEMO_USA_JEFFERS_SALES</div><div class="cbc" style="left:2099px;top:1104px"><svg viewBox="0 0 32 32" width="32" height="32" style="display:block"><path d="M4.500 16.800L12.700 24.500 27.500 8.300" fill="none" stroke="#fff" stroke-width="3"/></svg></div><div class="cbc" style="left:2327px;top:1104px"><svg viewBox="0 0 32 32" width="32" height="32" style="display:block"><path d="M4.500 16.800L12.700 24.500 27.500 8.300" fill="none" stroke="#fff" stroke-width="3"/></svg></div><div class="cbc" style="left:2556px;top:1104px"><svg viewBox="0 0 32 32" width="32" height="32" style="display:block"><path d="M4.500 16.800L12.700 24.500 27.500 8.300" fill="none" stroke="#fff" stroke-width="3"/></svg></div><svg class="ic" style="left:2806px;top:1098px;width:40px;height:40px" viewBox="0 0 24 24" ><path fill="#69789a" d="M14.060 9.020l.92.92L5.920 19H5v-.92l9.060-9.060M17.660 3c-.25 0-.51.1-.7.29l-1.830 1.830 3.750 3.750 1.830-1.830c.39-.39.39-1.020 0-1.410l-2.340-2.340c-.2-.2-.45-.29-.71-.29zm-3.600 3.190L3 17.250V21h3.750L17.810 9.940l-3.750-3.750z"/></svg>
<div class="cb" style="left:1072px;top:1166px"></div><div class="t td zh s24" style="left:1163px;top:1180px;">加拿大区山崩销售额</div><div class="t td" style="left:1501px;top:1180px;letter-spacing:-1.41px;-webkit-text-stroke:0.3px #212121">DEMO_CA_LS_SALES</div><div class="cbc" style="left:2099px;top:1166px"><svg viewBox="0 0 32 32" width="32" height="32" style="display:block"><path d="M4.500 16.800L12.700 24.500 27.500 8.300" fill="none" stroke="#fff" stroke-width="3"/></svg></div><div class="cbc" style="left:2327px;top:1166px"><svg viewBox="0 0 32 32" width="32" height="32" style="display:block"><path d="M4.500 16.800L12.700 24.500 27.500 8.300" fill="none" stroke="#fff" stroke-width="3"/></svg></div><div class="cbc" style="left:2556px;top:1166px"><svg viewBox="0 0 32 32" width="32" height="32" style="display:block"><path d="M4.500 16.800L12.700 24.500 27.500 8.300" fill="none" stroke="#fff" stroke-width="3"/></svg></div><svg class="ic" style="left:2806px;top:1160px;width:40px;height:40px" viewBox="0 0 24 24" ><path fill="#69789a" d="M14.060 9.020l.92.92L5.920 19H5v-.92l9.060-9.060M17.660 3c-.25 0-.51.1-.7.29l-1.830 1.830 3.750 3.750 1.830-1.830c.39-.39.39-1.020 0-1.410l-2.340-2.340c-.2-.2-.45-.29-.71-.29zm-3.600 3.190L3 17.250V21h3.750L17.810 9.940l-3.750-3.750z"/></svg>
<div class="cb" style="left:1072px;top:1228px"></div><div class="t td zh s24" style="left:1163px;top:1242px;">美国区三州品牌销售额</div><div class="t td" style="left:1501px;top:1242px;letter-spacing:-1.39px;-webkit-text-stroke:0.3px #212121">DEMO_USA_TRIS_SALES</div><div class="cbc" style="left:2099px;top:1228px"><svg viewBox="0 0 32 32" width="32" height="32" style="display:block"><path d="M4.500 16.800L12.700 24.500 27.500 8.300" fill="none" stroke="#fff" stroke-width="3"/></svg></div><div class="cbc" style="left:2327px;top:1228px"><svg viewBox="0 0 32 32" width="32" height="32" style="display:block"><path d="M4.500 16.800L12.700 24.500 27.500 8.300" fill="none" stroke="#fff" stroke-width="3"/></svg></div><div class="cbc" style="left:2556px;top:1228px"><svg viewBox="0 0 32 32" width="32" height="32" style="display:block"><path d="M4.500 16.800L12.700 24.500 27.500 8.300" fill="none" stroke="#fff" stroke-width="3"/></svg></div><svg class="ic" style="left:2806px;top:1222px;width:40px;height:40px" viewBox="0 0 24 24" ><path fill="#69789a" d="M14.060 9.020l.92.92L5.920 19H5v-.92l9.060-9.060M17.660 3c-.25 0-.51.1-.7.29l-1.830 1.830 3.750 3.750 1.830-1.830c.39-.39.39-1.020 0-1.410l-2.340-2.340c-.2-.2-.45-.29-.71-.29zm-3.600 3.190L3 17.250V21h3.750L17.810 9.940l-3.750-3.750z"/></svg>
<div class="t zh s24" style="left:2331px;top:1521px;font-size:24px;color:#777">每页</div><div class="t " style="left:2388px;top:1521px;font-size:25px;color:#111">20</div><div class="abs" style="left:2388px;top:1541px;width:112px;height:2px;background:#7a7a7a"></div>
<svg class="ic" style="left:2458px;top:1497px;width:48px;height:48px" viewBox="0 0 24 24" ><path fill="#707070" d="M7 10l5 5 5-5z"/></svg><div class="t zh s24" style="left:2563px;top:1525px;font-size:24px;color:#777">页 1 共 1</div><svg class="ic" style="left:2727px;top:1498px;width:54px;height:54px" viewBox="0 0 24 24" ><path fill="#c0c0c0" d="M18.410 16.590L13.820 12l4.590-4.590L17 6l-6 6 6 6zM6 6h2v12H6z"/></svg><svg class="ic" style="left:2791px;top:1498px;width:54px;height:54px" viewBox="0 0 24 24" ><path fill="#c0c0c0" d="M15.41 7.41L14 6l-6 6 6 6 1.41-1.41L10.83 12z"/></svg><svg class="ic" style="left:2854px;top:1498px;width:54px;height:54px" viewBox="0 0 24 24" ><path fill="#c0c0c0" d="M10 6L8.59 7.41 13.17 12l-4.58 4.59L10 18l6-6z"/></svg><svg class="ic" style="left:2918px;top:1498px;width:54px;height:54px" viewBox="0 0 24 24" ><path fill="#c0c0c0" d="M5.590 7.410L10.180 12l-4.590 4.590L7 18l6-6-6-6zM16 6h2v12h-2z"/></svg><div id="hdr" class="abs"></div>
<div class="t zh" style="left:534px;top:35px;font-size:40px;font-weight:900;background:linear-gradient(100deg,#06f78a 0%,#2ee6a3 36%,#42bdc4 62%,#4a8fe0 100%);-webkit-background-clip:text;background-clip:text;color:transparent;-webkit-text-fill-color:transparent">分析云</div>
<svg class="ic" style="left:668px;top:13px;width:50px;height:50px" viewBox="0 0 24 24" ><path fill="#cfd7e6" d="M15.41 7.41L14 6l-6 6 6 6 1.41-1.41L10.83 12z"/></svg><div class="abs hl" style="left:740px;top:0;width:266px;height:80px"></div>
<div class="t zh" style="left:766px;top:38px;color:#ffa500;font-size:28px;font-weight:600">默认</div><svg class="ic" style="left:826px;top:30px;width:24px;height:18px" viewBox="0 0 24 18"><path d="M5.500 5.500L12 12 18.500 5.500" fill="none" stroke="#ffa500" stroke-width="4" stroke-linecap="round" stroke-linejoin="round"/></svg>
<svg class="ic" style="left:897px;top:22px;width:32px;height:32px" viewBox="0 0 24 24" ><path fill="#cdd6e4" d="M22.47 5.2c-.47-.24-.96-.44-1.47-.61v12.030c-1.14-.41-2.31-.62-3.5-.62-1.9 0-3.78.54-5.5 1.58V5.48C10.38 4.55 8.51 4 6.5 4c-1.79 0-3.48.44-4.97 1.2-.33.16-.53.51-.53.88v12.080c0 .58.47.99 1 .99.16 0 .32-.04.48-.12C3.69 18.4 5.05 18 6.5 18c2.07 0 3.98.82 5.5 2 1.52-1.18 3.43-2 5.5-2 1.45 0 2.81.4 4.02 1.04.16.080.32.12.48.12.52 0 1-.41 1-.99V6.080c0-.37-.2-.72-.53-.88zM10 16.620C8.860 16.21 7.69 16 6.5 16s-2.36.21-3.5.62V6.710C4.110 6.240 5.280 6 6.500 6c1.200 0 2.390.25 3.500.72v9.900zM19 .5l-5 5V15l5-4.5V.5z"/></svg><div class="t zh" style="left:935px;top:38px;color:#d5dcea;font-size:24px;font-weight:700">项目</div><div class="abs" style="left:2262px;top:11px;width:559px;height:54px;border-radius:14px;background:#4f626e"></div>
<svg class="ic" style="left:2268px;top:24px;width:30px;height:30px" viewBox="0 0 30 30"><circle cx="12.500" cy="11.500" r="8.500" fill="none" stroke="#71838e" stroke-width="2"/><path d="M18.500 17.500L26 25" stroke="#71838e" stroke-width="2.200"/></svg>
<div class="t zh" style="left:2325px;top:36px;color:#8c9aa4;font-size:28px;font-weight:600">搜索<span style="letter-spacing:-1.500px">...</span></div><svg class="ic" style="left:2858px;top:20px;width:36px;height:36px" viewBox="0 0 36 36"><defs><linearGradient id="rh" x1="0" y1="0" x2="0" y2="1"><stop offset="0" stop-color="#dbf7f6"/><stop offset=".35" stop-color="#a9e3e4"/><stop offset=".62" stop-color="#3fb0bb"/><stop offset="1" stop-color="#0c7f90"/></linearGradient><linearGradient id="rb" x1="0" y1="0" x2="0" y2="1"><stop offset="0" stop-color="#ffd23a"/><stop offset="1" stop-color="#f08a12"/></linearGradient></defs><rect x="1.500" y="15.500" width="4" height="9" rx="2" fill="#c4161c"/><rect x="30.500" y="15.500" width="4" height="9" rx="2" fill="#c4161c"/><ellipse cx="18" cy="7.800" rx="3.600" ry="2" fill="#6b4a9c"/><circle cx="18" cy="4.300" r="3.100" fill="url(#rb)"/><rect x="4" y="7.500" width="28" height="26.500" rx="6" fill="url(#rh)"/><path d="M4 28v0c0 3.300 2.700 6 6 6h16c3.300 0 6-2.700 6-6v-1.500c0 3.300-2.700 5.500-6 5.500H10c-3.300 0-6-2.200-6-5.500z" fill="#075a68"/><circle cx="11.300" cy="17.400" r="4.100" fill="#12bfe6"/><circle cx="24.700" cy="17.400" r="4.100" fill="#12bfe6"/><circle cx="11.300" cy="17.400" r="2.300" fill="#fff"/><circle cx="24.700" cy="17.400" r="2.300" fill="#fff"/><path d="M18 18.500l2.600 5.200h-5.200z" fill="#e8343f"/><rect x="12" y="26.300" width="12" height="3.200" rx="1" fill="#4a3a36"/><path d="M13 26.800h2v2.200h-2zM15.700 26.800h2v2.200h-2zM18.400 26.800h2v2.200h-2zM21.100 26.800h2v2.200h-2z" fill="#f4efe6"/></svg>
<svg class="ic" style="left:2950px;top:14px;width:40px;height:50px" viewBox="0 0 40 50"><path fill="#a6a6a6" d="M20 1c-6.800 0-10.800 3.800-10.800 10.500 0 1.700.2 3.300.5 4.600-.9.300-1.200 1.400-.9 2.900.3 1.600 1 2.800 2 3 .7 1.800 1.700 3.400 3 4.700.4 2.300.1 4.300-.9 5.600C10.500 35 3.800 36.300 1 41.500c4 5 11.500 8 19 8s15-3 19-8c-2.800-5.200-9.500-6.500-11.900-9.200-1-1.300-1.300-3.300-.9-5.600 1.300-1.300 2.300-2.900 3-4.700 1-.2 1.700-1.400 2-3 .3-1.500 0-2.600-.9-2.900.3-1.300.5-2.900.5-4.600C30.800 4.800 26.800 1 20 1z"/></svg>
<div id="status" class="abs"></div>
<div class="abs" style="left:520px;top:1490px;width:2504px;height:128px;background:linear-gradient(180deg,rgba(0,0,0,0) 0%,rgba(0,0,0,.012) 40%,rgba(0,0,0,.05) 76%,rgba(0,0,0,.115) 100%);-webkit-mask-image:linear-gradient(90deg,rgba(0,0,0,0) 6%,#000 28%,#000 57%,rgba(0,0,0,0) 72%);mask-image:linear-gradient(90deg,rgba(0,0,0,0) 6%,#000 28%,#000 57%,rgba(0,0,0,0) 72%)"></div>
<div class="t zh" style="left:552px;top:1602px;font-size:24px;color:#222">状态栏:</div><svg class="ic" style="left:2868px;top:1591px;width:24px;height:24px" viewBox="0 0 24 24" ><path fill="#1a1a1a" d="M7.580 4.080L6.150 2.650C3.750 4.480 2.170 7.300 2.030 10.5h2c.15-2.650 1.510-4.970 3.550-6.420zm12.390 6.420h2c-.15-3.200-1.730-6.020-4.120-7.850l-1.420 1.430c2.020 1.450 3.390 3.770 3.540 6.420zM18 11c0-3.070-1.640-5.640-4.5-6.320V4c0-.83-.67-1.5-1.5-1.5s-1.5.67-1.5 1.5v.68C7.630 5.360 6 7.920 6 11v5l-2 2v1h16v-1l-2-2v-5zm-6 11c.14 0 .27-.01.4-.04.65-.14 1.180-.58 1.440-1.180.1-.24.15-.5.15-.78h-4c.01 1.1.9 2 2.010 2z"/></svg><svg class="ic" style="left:2900px;top:1591px;width:24px;height:24px" viewBox="0 0 24 24" ><path fill="#1a1a1a" d="M19.810 14.990l1.190-.92-1.430-1.430-1.190.92 1.430 1.430zm-.45-4.720L21 9l-9-7-2.910 2.270 7.870 7.880 2.400-1.880zM3.270 1L2 2.270l4.220 4.220L3 9l1.630 1.270L12 16l2.100-1.630 1.430 1.430L12 18.540l-7.370-5.730L3 14.070l9 7 4.950-3.850L20.730 21 22 19.730 3.270 1z"/></svg><svg class="ic" style="left:2932px;top:1591px;width:24px;height:24px" viewBox="0 0 24 24"><circle cx="12" cy="12" r="11.500" fill="#1a1a1a"/><rect x="6.400" y="6.400" width="11.200" height="11.200" rx="1.500" transform="rotate(45 12 12)" fill="#fff"/><path d="M8.500 15v-3.500c0-.55.45-1 1-1H14V8.500l3 3-3 3v-2h-3.500V15z" fill="#1a1a1a"/></svg>
<svg class="ic" style="left:2962px;top:1589px;width:28px;height:28px" viewBox="0 0 24 24" ><path fill="#0f9d8a" d="M15 9H9v6h6V9zm-2 4h-2v-2h2v2zm8-2V9h-2V7c0-1.1-.9-2-2-2h-2V3h-2v2h-2V3H9v2H7c-1.1 0-2 .9-2 2v2H3v2h2v2H3v2h2v2c0 1.1.9 2 2 2h2v2h2v-2h2v2h2v-2h2c1.1 0 2-.9 2-2v-2h2v-2h-2v-2h2zm-4 6H7V7h10v10z"/></svg><div class="abs" style="left:3004px;top:1598px;width:20px;height:20px;background:radial-gradient(circle at 0 0,rgba(0,0,0,0) 22px,#4f4644 23.500px)"></div>
<div class="abs" style="left:0;top:1598px;width:20px;height:20px;background:radial-gradient(circle at 20px 0,rgba(0,0,0,0) 22px,#4f4644 23.500px)"></div>

</div>
</body>
</html>
